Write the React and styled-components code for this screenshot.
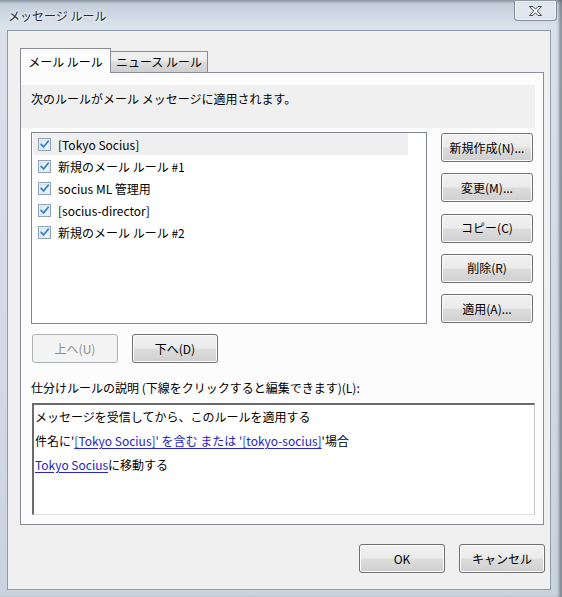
import React from "react";
import styled, { createGlobalStyle } from "styled-components";

const GlobalStyle = createGlobalStyle`
  html, body { margin: 0; padding: 0; }
  body { background: #d3dce6; }
  * { box-sizing: border-box; }
`;

const FONT = `"Noto Sans CJK JP", "Noto Sans", sans-serif`;

const Window = styled.div`
  width: 562px;
  height: 597px;
  display: flex;
  flex-direction: column;
  font-family: ${FONT};
  font-size: 12px;
  color: #000;
  background: linear-gradient(to bottom, #8f9aa6 0px, #c4cfdb 4px, #d9e2eb 26px, #d2dbe5 60%, #c9d3de 100%);
  box-shadow: inset -4px 0 3px -1px rgba(70, 78, 88, 0.55);
`;

const TitleBar = styled.div`
  height: 30px;
  display: flex;
  align-items: flex-start;
  justify-content: space-between;
  padding: 0 5px 0 8px;
`;

const Title = styled.div`
  padding-top: 7px;
  font-size: 12px;
  line-height: 18px;
  color: #262b31;
  text-shadow: 0 0 6px #fff, 0 0 3px #fff;
`;

const CloseButton = styled.div`
  width: 43px;
  height: 20px;
  margin-top: 1px;
  border: 1px solid #7f8b99;
  border-top: none;
  border-radius: 0 0 4px 4px;
  background: linear-gradient(to bottom, rgba(255,255,255,0.55), rgba(230,236,243,0.6));
  box-shadow: inset 0 0 0 1px rgba(255,255,255,0.6);
  display: flex;
  align-items: center;
  justify-content: center;
`;

const Client = styled.div`
  flex: 1;
  margin: 0 11px 7px 7px;
  border: 1px solid #8e9bab;
  background: #f0f0f0;
  display: flex;
  flex-direction: column;
  padding: 17px 0 0 12px;
`;

const TabStrip = styled.div`
  display: flex;
  align-items: flex-end;
  position: relative;
  z-index: 1;
  margin-bottom: -1px;
`;

const Tab = styled.div`
  height: ${(p) => (p.$active ? 25 : 22)}px;
  width: ${(p) => p.$w}px;
  margin-left: ${(p) => (p.$first ? 0 : -1)}px;
  border: 1px solid #898c95;
  border-bottom: ${(p) => (p.$active ? "none" : "1px solid #898c95")};
  background: ${(p) =>
    p.$active
      ? "#fcfcfc"
      : "linear-gradient(to bottom, #f3f3f3 0%, #ebebeb 45%, #dddddd 50%, #cfcfcf 100%)"};
  display: flex;
  align-items: center;
  justify-content: center;
  padding-top: ${(p) => (p.$active ? 1 : 0)}px;
  font-size: 12px;
  line-height: 16px;
  white-space: nowrap;
`;

const TabPanel = styled.div`
  width: 524px;
  height: 453px;
  border: 1px solid #898c95;
  background: #fcfcfc;
  display: flex;
  flex-direction: column;
`;

const InfoBand = styled.div`
  margin-top: 12px;
  width: 514px;
  height: 43px;
  background: #f0f0f0;
  padding: 5px 0 0 10px;
  line-height: 18px;
`;

const ListRow = styled.div`
  display: flex;
  margin: 4px 0 0 10px;
  gap: 14px;
`;

const RuleList = styled.div`
  width: 396px;
  height: 192px;
  border: 1px solid #828790;
  background: #fff;
  padding: 0 0 0 1px;
  display: flex;
  flex-direction: column;
`;

const RuleItem = styled.div`
  width: 375px;
  height: 22px;
  display: flex;
  align-items: center;
  gap: 7px;
  padding-left: 5px;
  background: ${(p) => (p.$selected ? "#efefef" : "transparent")};
  white-space: nowrap;
`;

const ButtonColumn = styled.div`
  display: flex;
  flex-direction: column;
  gap: 11.25px;
  padding-top: 1px;
`;

const Button = styled.div`
  width: ${(p) => p.$w}px;
  height: 29px;
  border: 1px solid ${(p) => (p.$disabled ? "#adb2b5" : "#707070")};
  border-radius: 3px;
  background: ${(p) =>
    p.$disabled
      ? "#f4f4f4"
      : "linear-gradient(to bottom, #f2f2f2 0%, #ebebeb 48%, #dddddd 52%, #cfcfcf 100%)"};
  box-shadow: inset 0 0 0 1px ${(p) => (p.$disabled ? "#f4f4f4" : "#fcfcfc")};
  color: ${(p) => (p.$disabled ? "#8d8d8d" : "#000")};
  display: flex;
  align-items: center;
  justify-content: center;
  font-size: 12px;
  line-height: 16px;
  white-space: nowrap;
`;

const MoveRow = styled.div`
  display: flex;
  gap: 14px;
  margin: 10px 0 0 11px;
`;

const DescLabel = styled.div`
  margin: 16px 0 0 10px;
  line-height: 18px;
  white-space: nowrap;
`;

const DescBox = styled.div`
  margin: 6px 0 0 11px;
  width: 503px;
  height: 112px;
  background: #fff;
  border-style: solid;
  border-width: 2px 1px 1px 2px;
  border-color: #6b6b6b #c9c9c9 #e3e3e3 #6b6b6b;
  padding: 0 0 0 1px;
`;

const DescLine = styled.div`
  line-height: 24px;
  white-space: nowrap;
`;

const Link = styled.span`
  color: #2424c8;
  text-decoration: underline;
  text-underline-offset: 2px;
`;

const Footer = styled.div`
  width: 525px;
  display: flex;
  justify-content: flex-end;
  gap: 14px;
  margin-top: 19px;
`;

const CheckBox = () => (
  <svg width="13" height="13" viewBox="0 0 13 13">
    <defs>
      <linearGradient id="cbg" x1="0" y1="0" x2="1" y2="1">
        <stop offset="0" stopColor="#dfe6ee" />
        <stop offset="1" stopColor="#ffffff" />
      </linearGradient>
    </defs>
    <rect x="0.5" y="0.5" width="12" height="12" fill="#f6f8fb" stroke="#8fa2b8" />
    <rect x="2" y="2" width="9" height="9" fill="url(#cbg)" stroke="#c3cfdc" strokeWidth="0.6" />
    <path d="M3.2 6.4 L5.6 9 L10.2 3.2" fill="none" stroke="#2f7fd4" strokeWidth="1.8" strokeLinejoin="round" strokeLinecap="round" />
  </svg>
);

const CloseIcon = () => (
  <svg width="15" height="12" viewBox="0 0 15 12">
    <polygon
      points="1.5,1.5 5,1.5 7.5,4.2 10,1.5 13.5,1.5 9.3,6 13.5,10.5 10,10.5 7.5,7.8 5,10.5 1.5,10.5 5.7,6"
      fill="#ffffff"
      stroke="#424c58"
      strokeWidth="1"
      strokeLinejoin="round"
    />
  </svg>
);

const rules = [
  "[Tokyo Socius]",
  "新規のメール ルール #1",
  "socius ML 管理用",
  "[socius-director]",
  "新規のメール ルール #2",
];

const sideButtons = ["新規作成(N)...", "変更(M)...", "コピー(C)", "削除(R)", "適用(A)..."];

export default function App() {
  return (
    <>
      <GlobalStyle />
      <Window>
        <TitleBar>
          <Title>メッセージ ルール</Title>
          <CloseButton>
            <CloseIcon />
          </CloseButton>
        </TitleBar>
        <Client>
          <TabStrip>
            <Tab $active $first $w={91}>メール ルール</Tab>
            <Tab $w={98}>ニュース ルール</Tab>
          </TabStrip>
          <TabPanel>
            <InfoBand>次のルールがメール メッセージに適用されます。</InfoBand>
            <ListRow>
              <RuleList>
                {rules.map((r, i) => (
                  <RuleItem key={r} $selected={i === 0}>
                    <CheckBox />
                    <span>{r}</span>
                  </RuleItem>
                ))}
              </RuleList>
              <ButtonColumn>
                {sideButtons.map((b) => (
                  <Button key={b} $w={92}>{b}</Button>
                ))}
              </ButtonColumn>
            </ListRow>
            <MoveRow>
              <Button $w={86} $disabled>上へ(U)</Button>
              <Button $w={86}>下へ(D)</Button>
            </MoveRow>
            <DescLabel>仕分けルールの説明 (下線をクリックすると編集できます)(L):</DescLabel>
            <DescBox>
              <DescLine>メッセージを受信してから、このルールを適用する</DescLine>
              <DescLine>
                件名に'<Link>[Tokyo Socius]' を含む または '[tokyo-socius]</Link>'場合
              </DescLine>
              <DescLine>
                <Link>Tokyo Socius</Link>に移動する
              </DescLine>
            </DescBox>
          </TabPanel>
          <Footer>
            <Button $w={86}>OK</Button>
            <Button $w={86}>キャンセル</Button>
          </Footer>
        </Client>
      </Window>
    </>
  );
}
